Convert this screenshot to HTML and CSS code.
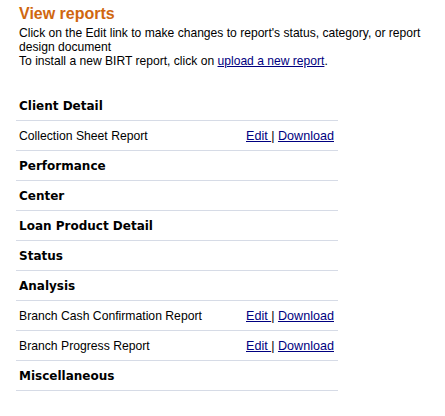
FILE: index.html
```html
<!DOCTYPE html>
<html>
<head>
<meta charset="utf-8">
<title>View reports</title>
<link rel="stylesheet" href="styles.css">
</head>
<body>
<div class="page">
  <h1 class="title">View reports</h1>
  <p class="intro">Click on the Edit link to make changes to report's status, category, or report design document<br>To install a new BIRT report, click on <a href="#" class="link">upload a new report</a>.</p>
  <div class="reports">
    <div class="row category">Client Detail</div>
    <div class="row report"><span class="name">Collection Sheet Report</span><span class="actions"><a href="#" class="link">Edit </a>| <a href="#" class="link">Download</a></span></div>
    <div class="row category">Performance</div>
    <div class="row category">Center</div>
    <div class="row category">Loan Product Detail</div>
    <div class="row category">Status</div>
    <div class="row category">Analysis</div>
    <div class="row report"><span class="name">Branch Cash Confirmation Report</span><span class="actions"><a href="#" class="link">Edit </a>| <a href="#" class="link">Download</a></span></div>
    <div class="row report"><span class="name">Branch Progress Report</span><span class="actions"><a href="#" class="link">Edit </a>| <a href="#" class="link">Download</a></span></div>
    <div class="row category">Miscellaneous</div>
  </div>
</div>
</body>
</html>
```

FILE: styles.css
```css
html, body {
  margin: 0;
  padding: 0;
  background: #ffffff;
}

.page {
  padding: 4px 0 0 16px;
  font-family: "Liberation Sans", Arial, sans-serif;
  font-size: 12.1px;
  color: #000000;
}

.title {
  margin: 0 0 3px 3px;
  font-size: 16px;
  line-height: 19px;
  font-weight: bold;
  color: #d0670f;
}

.intro {
  margin: 0 0 23px 3px;
  line-height: 14px;
}

.link {
  color: #000080;
  text-decoration: underline;
}

.reports {
  width: 322px;
}

.row {
  display: flex;
  justify-content: space-between;
  padding: 8px 4px 7px 3px;
  line-height: 14px;
  border-bottom: 1px solid #d6dbe6;
}

.report .name {
  font-size: 12.2px;
}

.category {
  font-family: "DejaVu Sans", Verdana, sans-serif;
  font-weight: bold;
  font-size: 12px;
}

.actions {
  white-space: pre;
  font-size: 12.6px;
}
```
